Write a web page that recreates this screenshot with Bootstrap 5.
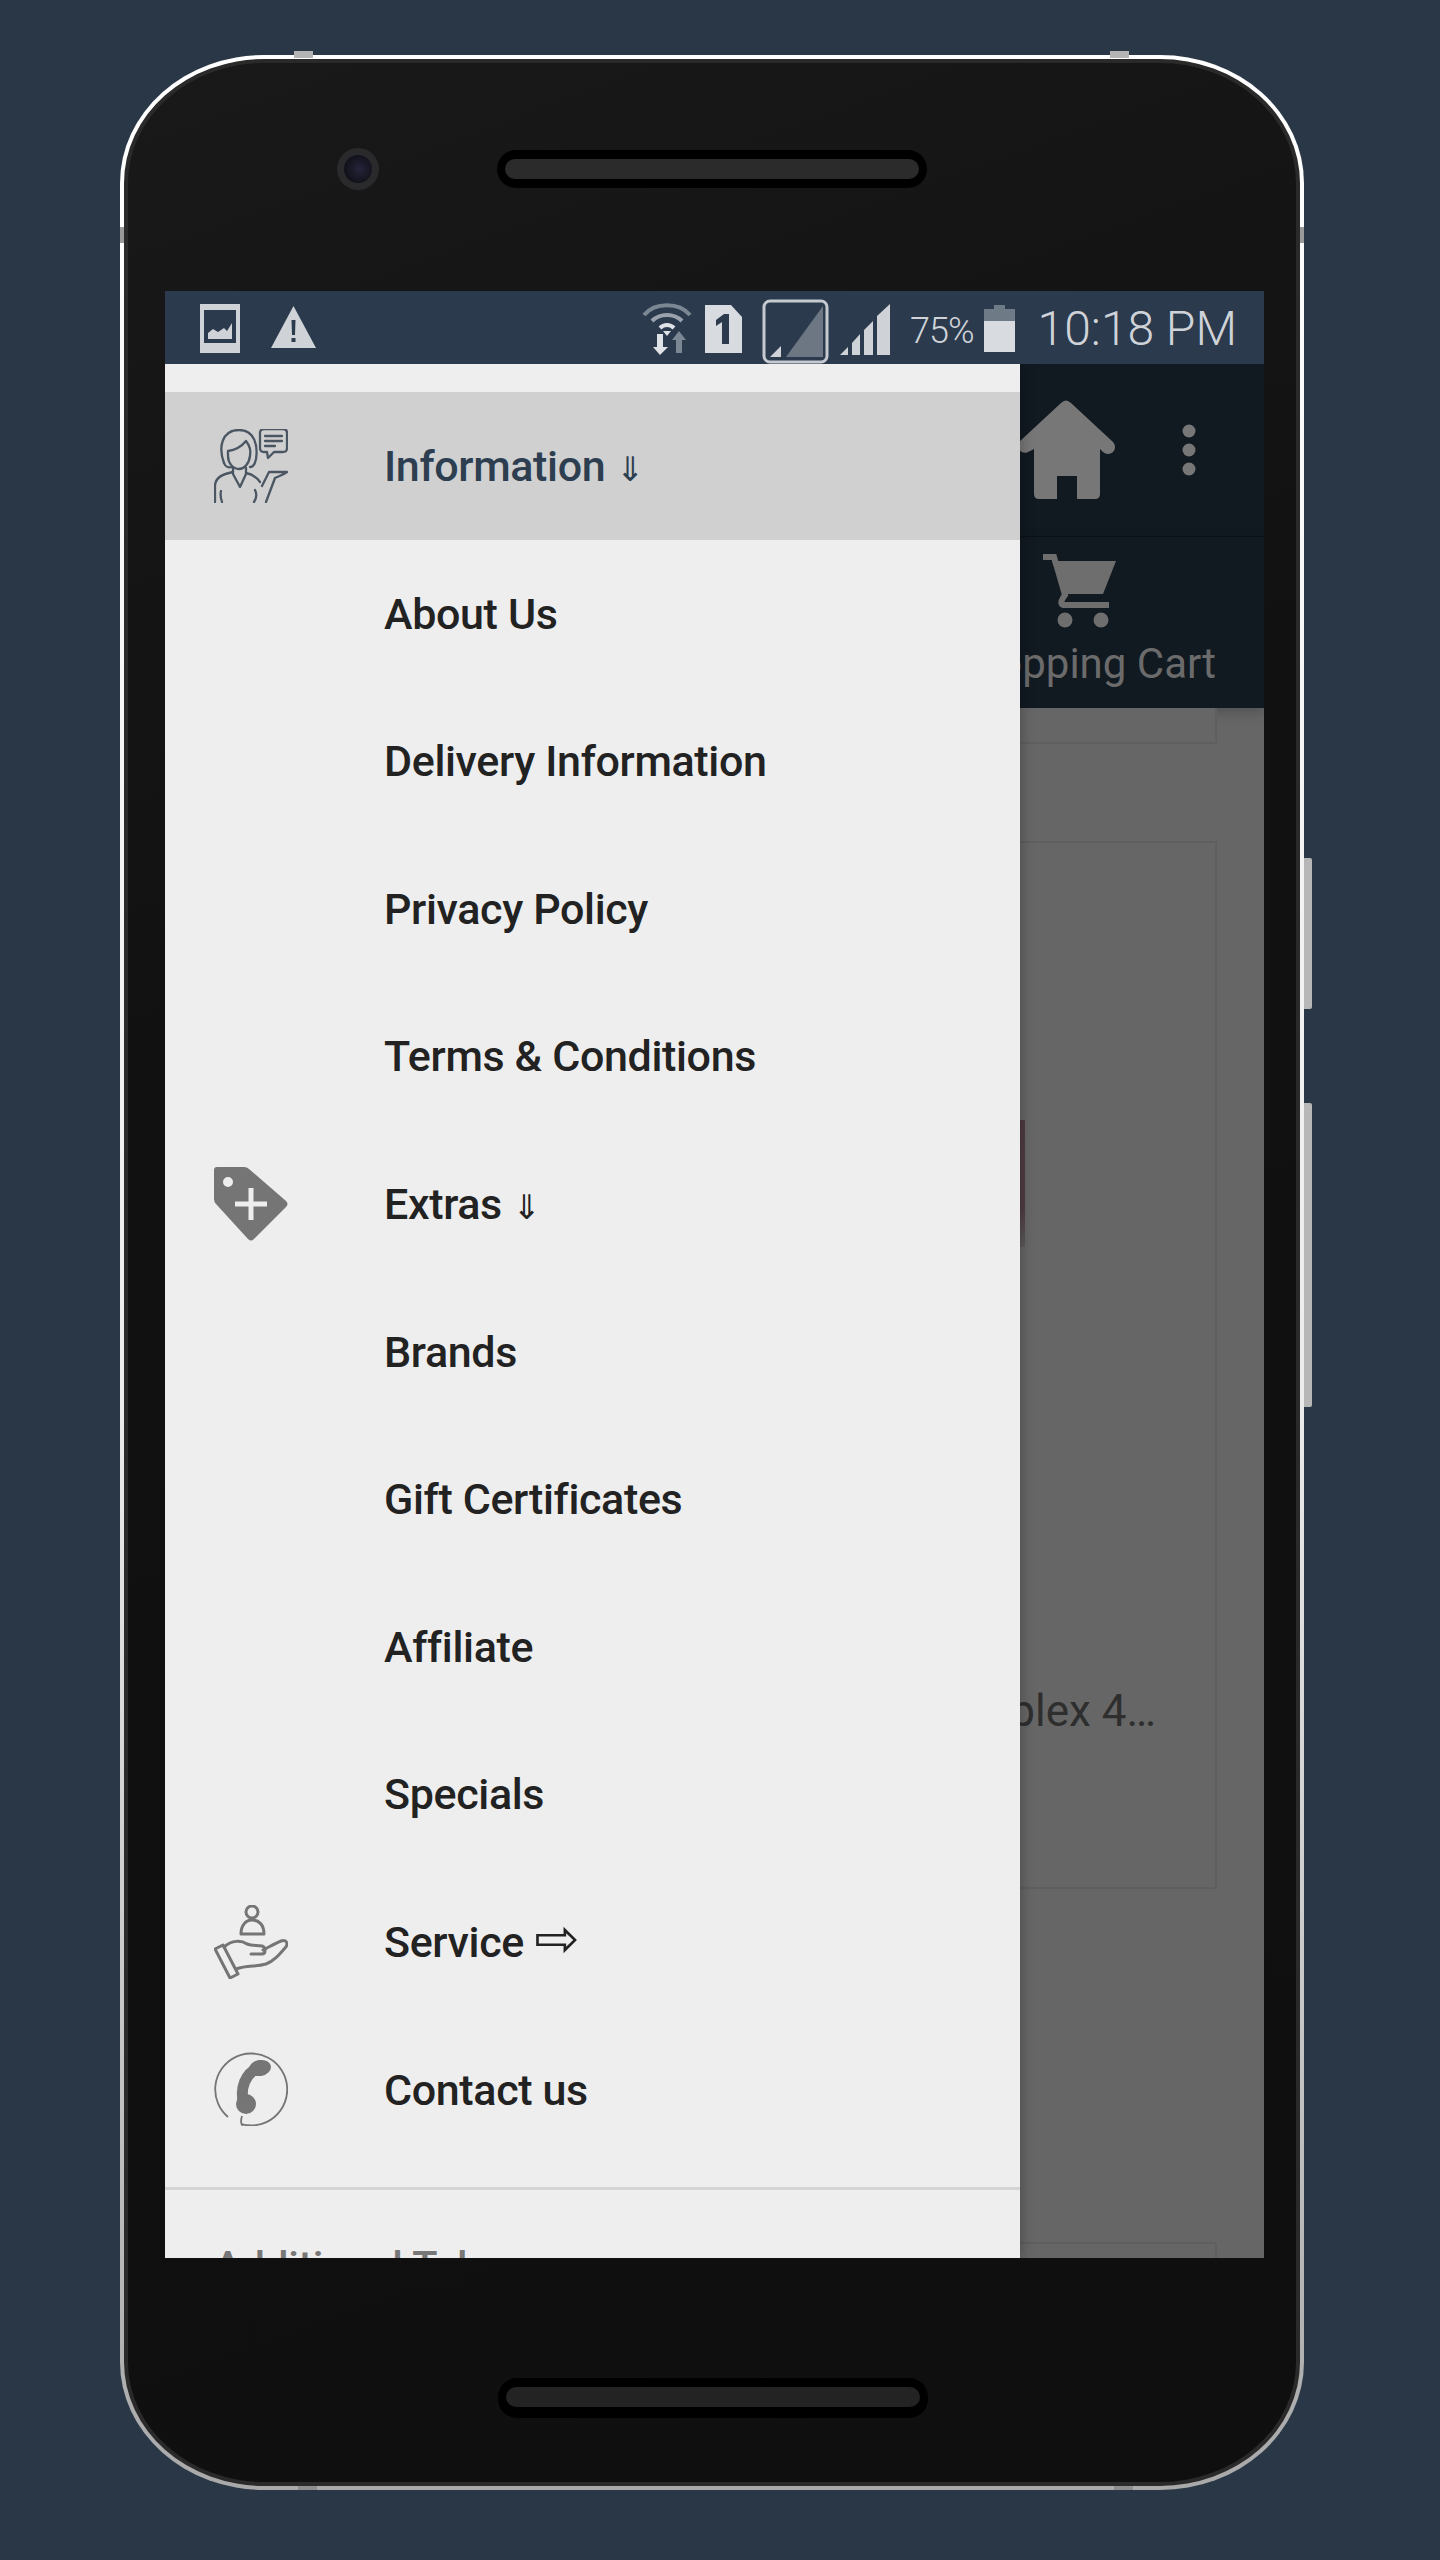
<!DOCTYPE html>
<html lang="en">
<head>
  <meta charset="UTF-8">
  <title>Menu</title>
  <link href="https://cdn.jsdelivr.net/npm/bootstrap@5.3.0/dist/css/bootstrap.min.css" rel="stylesheet">
  <style>
    body { background: #2a3747; font-family: Roboto, sans-serif; margin: 0; height: 2560px; overflow: hidden; }

    /* phone shell */
    .phone-shell { width: 1184px; height: 2435px; margin: 55px 0 0 120px; padding: 4px; border-radius: 144px / 128px;
      background: linear-gradient(180deg, #fff 0%, #ececec 55%, #a9a9a9 100%); position: relative; }
    .bezel { height: 100%; border-radius: 140px / 124px; border: 4px solid #2a2a2a; background: linear-gradient(160deg, #191919 0%, #111 35%, #0f0f0f 100%); padding: 0 32px 0 37px; }
    .bezel-top { height: 228px; padding-left: 172px; gap: 118px; }
    .bezel-bottom { height: 225px; padding-top: 120px; }
    .camera { width: 42px; height: 42px; border-radius: 50%; background: #2a2a2c; padding: 7px; margin-top: 85px; }
    .camera span { display: block; width: 100%; height: 100%; border-radius: 50%; background: radial-gradient(circle at 55% 50%, #26243a 0, #11111a 70%); }
    .speaker { width: 430px; height: 38px; border-radius: 19px; background: #000; padding: 9px 8px; margin-top: 87px; }
    .speaker span { display: block; height: 20px; border-radius: 10px; background: #2b2b2b; }
    .speaker-low { margin: 0 0 0 333px; height: 40px; }
    .speaker-low span { background: #232323; }
    .side-key { position: absolute; left: 1184px; width: 8px; background: #b7b7b7; border-radius: 0 2px 2px 0; }
    .key-a { top: 803px; height: 151px; }
    .key-b { top: 1048px; height: 304px; }
    .top-tab { position: absolute; width: 19px; height: 7px; background: #b4b4b4; top: -4px; }
    .edge-band { position: absolute; width: 4px; height: 16px; top: 172px; background: #9a9a9a; }
    .low-band { position: absolute; width: 19px; height: 4px; bottom: 0; background: #8e8e8e; }

    /* screen */
    .screen { width: 1099px; height: 1967px; overflow: hidden; position: relative; background: #666; }
    .status-line { height: 73px; background: #2b3a4c; color: #cfd3d8; position: relative; z-index: 2; }
    .status-pct { font-size: 36px; font-weight: 300; line-height: 1; letter-spacing: -1px; }
    .status-time { font-size: 48px; font-weight: 300; line-height: 1; }
    .app-bar { height: 173px; background: #111921; padding-right: 68px; gap: 64px; border-bottom: 1px solid #0c1218; }
    .tab-strip { height: 171px; background: #111921; padding-right: 48px; position: relative; box-shadow: 0 4px 12px rgba(0,0,0,.22); }
    .tab-cart { font-size: 42px; line-height: 1; color: #6b6b6b; white-space: nowrap; margin-top: 15px; }
    .cart-icon { margin: 17px 7px 0 0; }
    .product-box { background: #666; border: 2px solid #5f5f5f; color: #2e2e2e; margin: 0 47px; }
    .box-a { height: 36px; margin-bottom: 97px; border-top: 0; }
    .box-b { height: 1048px; margin-bottom: 353px; }
    .box-c { height: 200px; }
    .shot-edge { width: 811px; height: 127px; margin-top: 277px; background: linear-gradient(180deg, #4e3a40 0%, #4f3d43 70%, #5c5a5b 100%); }
    .box-title { font-size: 44px; line-height: 1.2; text-align: right; padding: 438px 59px 0 0; }

    /* drawer */
    .side-drawer { position: absolute; top: 73px; left: 0; bottom: 0; width: 855px; background: #eee; padding-top: 28px; box-shadow: 0 0 14px rgba(0,0,0,.3); overflow: hidden; }
    .drawer-row { height: 147.6px; padding: 1px 0 0 49px; gap: 96px; background: transparent; border: 0; color: #222; font-size: 43px; font-weight: 500; letter-spacing: -.35px; }
    .drawer-row.is-open { background: #d0d0d0; color: #2c3e50; }
    .row-icon { width: 74px; height: 74px; flex: none; margin-top: -1px; }
    .arrow-mark { font-family: "DejaVu Sans", sans-serif; font-weight: 400; font-size: 34px; line-height: 0; }
    .arrow-wide { font-size: 54px; }
    .drawer-line { height: 3px; background: #d4d4d4; margin-top: 24px; }
    .drawer-extra { color: #777; font-size: 41.500px; font-weight: 500; padding: 51px 0 0 49px; line-height: 1.2; }
  </style>
</head>
<body>
  <div class="phone-shell">
    <div class="top-tab" style="left:174px"></div>
    <div class="top-tab" style="left:990px"></div>
    <div class="edge-band" style="left:0"></div>
    <div class="edge-band" style="right:0"></div>
    <div class="low-band" style="left:178px"></div>
    <div class="low-band" style="left:994px"></div>
    <div class="side-key key-a"></div>
    <div class="side-key key-b"></div>

    <div class="bezel">
      <!-- camera and earpiece -->
      <div class="bezel-top d-flex align-items-start">
        <div class="camera"><span></span></div>
        <div class="speaker"><span></span></div>
      </div>

      <div class="screen">
        <!-- status bar -->
        <div class="status-line d-flex align-items-center">
          <svg width="40" height="49" viewBox="0 0 40 49" style="margin-left:35px;margin-top:2px">
            <path fill="#cfd3d8" fill-rule="evenodd" d="M0 0H40V49H0ZM4 6V39H36V6Z"/>
            <path fill="#cfd3d8" d="M8 35V29L13 25L18 28L24 24L27 27L32 19V35Z"/>
          </svg>
          <svg width="45" height="42" viewBox="0 0 45 42" style="margin-left:31px;margin-top:-1px">
            <path fill="#cfd3d8" fill-rule="evenodd" d="M22.500 0L45 42H0ZM20.500 14L21 29H24L24.500 14ZM20.500 32V36H24.500V32Z"/>
          </svg>
          <svg width="50" height="54" viewBox="0 0 50 54" style="margin-left:326px;margin-top:0">
            <g fill="none" stroke-width="4">
              <path stroke="#7c8794" d="M2 14C13 1 37 1 48 14"/>
              <path stroke="#9aa3ad" d="M10 20C18 12 32 12 40 20"/>
              <path stroke="#dfe2e6" d="M18 27C22 23 28 23 32 27"/>
            </g>
            <path fill="#dfe2e6" d="M25 35L21 30H29Z"/>
            <path fill="#dfe2e6" d="M15 33H21V46H26L18 54L11 46H15Z"/>
            <path fill="#7c8794" d="M37 30L44 39H40V52H34V39H30Z"/>
          </svg>
          <svg width="37" height="48" viewBox="0 0 37 48" style="margin-left:13px;margin-top:3px">
            <path fill="#d8dbdf" d="M0 0H26L37 12V48H0Z"/>
            <path fill="#2b3a4c" d="M11 15L19 9H24V39H17V17L11 21Z"/>
          </svg>
          <svg width="67" height="65" viewBox="0 0 67 65" style="margin-left:20px;margin-top:7px">
            <rect x="2" y="2" width="63" height="61" rx="6" fill="none" stroke="#c5cad0" stroke-width="3"/>
            <path fill="#6c7783" d="M61 7V58H24Z"/>
            <path fill="#cfd3d8" d="M19 47V58H8Z"/>
          </svg>
          <svg width="50" height="51" viewBox="0 0 50 51" style="margin-left:11px;margin-top:4px">
            <path fill="#cfd3d8" d="M0 51L8 43V51ZM12 39L20 30V51H12ZM24 26L33 17V51H24ZM37 12L50 0V51H37Z"/>
          </svg>
          <span class="status-pct" style="margin-left:20px;margin-top:6px">75%</span>
          <svg width="31" height="47" viewBox="0 0 31 47" style="margin-left:10px;margin-top:1px">
            <path fill="#6f7a87" d="M10 0H21V4H31V16H0V4H10Z"/>
            <path fill="#d8dbdf" d="M0 16H31V47H0Z"/>
          </svg>
          <span class="status-time" style="margin-left:23px;margin-top:3px">10:18 PM</span>
        </div>

        <!-- page behind the drawer, dimmed -->
        <div class="app-bar d-flex justify-content-end align-items-center">
          <svg width="105" height="106" viewBox="0 0 105 106">
            <path fill="#777" d="M48 6Q53 1 58 6L100 45A7 7 0 0 1 90 55L87 52V97Q87 102 82 102H64V79H44V102H26Q21 102 21 97V52L15 55A7 7 0 0 1 6 45Z"/>
          </svg>
          <svg width="14" height="52" viewBox="0 0 14 52" style="margin-top:-1px">
            <circle cx="7" cy="7" r="6.500" fill="#777"/>
            <circle cx="7" cy="26" r="6.500" fill="#777"/>
            <circle cx="7" cy="45" r="6.500" fill="#777"/>
          </svg>
        </div>
        <div class="tab-strip d-flex justify-content-end">
          <div class="d-flex flex-column align-items-center">
            <svg class="cart-icon" width="74" height="74" viewBox="0 0 74 74">
              <path fill="#6e6e6e" d="M9 7H73L60 40H21Z"/>
              <path fill="none" stroke="#6e6e6e" stroke-width="6" d="M0 3H11L22 41Q14 52 23 51H66"/>
              <circle cx="22" cy="66" r="7.500" fill="#6e6e6e"/>
              <circle cx="58" cy="66" r="7.500" fill="#6e6e6e"/>
            </svg>
            <div class="tab-cart">Shopping Cart</div>
          </div>
        </div>
        <div class="card rounded-0 product-box box-a"></div>
        <div class="card rounded-0 product-box box-b">
          <div class="shot-edge"></div>
          <div class="box-title">Complex 4…</div>
        </div>
        <div class="card rounded-0 product-box box-c"></div>

        <!-- drawer -->
        <div class="side-drawer">
          <div class="list-group list-group-flush rounded-0">
            <div class="list-group-item d-flex align-items-center drawer-row is-open">
              <svg class="row-icon" viewBox="0 0 74 74" fill="none" stroke="#4b5663" stroke-width="2.300" stroke-linecap="round" stroke-linejoin="round">
                <path d="M10 34C4 18 8 1 25 1C41 1 44 17 42 30C41 35 39 38 36 38"/>
                <path d="M10 34C11 37 14 39 18 38"/>
                <path d="M14 22C21 21 28 17 32 12C36 17 37 22 36 27C35 35 30 40 25 40C19 40 14 34 14 27Z"/>
                <path d="M19 39V45L26 58L32 45V39"/>
                <path d="M19 43C8 45 1 49 1 57V73"/>
                <path d="M32 44C38 45 43 49 46 53"/>
                <path d="M7 62C6 66 7 70 8 73M41 61C43 65 42 70 40 73"/>
                <path d="M52 73L61 49C65 47 69 46 73 43H55L48 57"/>
                <path d="M50 0H69Q73 0 73 4V19Q73 23 69 23H60L54 29L53 23H50Q46 23 46 19V4Q46 0 50 0Z"/>
                <path d="M51 7H68M51 12H68M51 17H61"/>
              </svg>
              <span>Information <span class="arrow-mark">⇓</span></span>
            </div>
            <div class="list-group-item d-flex align-items-center drawer-row"><span class="row-icon"></span><span>About Us</span></div>
            <div class="list-group-item d-flex align-items-center drawer-row"><span class="row-icon"></span><span>Delivery Information</span></div>
            <div class="list-group-item d-flex align-items-center drawer-row"><span class="row-icon"></span><span>Privacy Policy</span></div>
            <div class="list-group-item d-flex align-items-center drawer-row"><span class="row-icon"></span><span>Terms &amp; Conditions</span></div>
            <div class="list-group-item d-flex align-items-center drawer-row">
              <svg class="row-icon" viewBox="0 0 74 74">
                <path fill="#757575" fill-rule="evenodd" d="M3 0H30Q33 0 35 2L72 34Q75 37 72 40L40 72Q37 75 34 72L2 37Q0 35 0 32V3Q0 0 3 0ZM14 10A5 5 0 1 0 14 20A5 5 0 1 0 14 10ZM34.500 21V34.500H21V39.500H34.500V53H39.500V39.500H53V34.500H39.500V21Z"/>
              </svg>
              <span>Extras <span class="arrow-mark">⇓</span></span>
            </div>
            <div class="list-group-item d-flex align-items-center drawer-row"><span class="row-icon"></span><span>Brands</span></div>
            <div class="list-group-item d-flex align-items-center drawer-row"><span class="row-icon"></span><span>Gift Certificates</span></div>
            <div class="list-group-item d-flex align-items-center drawer-row"><span class="row-icon"></span><span>Affiliate</span></div>
            <div class="list-group-item d-flex align-items-center drawer-row"><span class="row-icon"></span><span>Specials</span></div>
            <div class="list-group-item d-flex align-items-center drawer-row">
              <svg class="row-icon" viewBox="0 0 74 74" fill="none" stroke="#757575" stroke-width="3" stroke-linejoin="round" stroke-linecap="round">
                <circle cx="38" cy="7" r="6"/>
                <path d="M27 29C27 20 32 15 38 15C45 15 50 20 50 29Z"/>
                <path d="M1 44L16 73L24 69L9 40Z"/>
                <path d="M10 42C18 35 27 35 33 39C38 41 43 40 48 41C52 42 52 49 48 49H37"/>
                <path d="M49 45C55 42 62 38 67 36C74 34 74 40 71 43C65 50 60 56 52 59C42 62 33 60 22 64"/>
              </svg>
              <span>Service <span class="arrow-mark arrow-wide">⇨</span></span>
            </div>
            <div class="list-group-item d-flex align-items-center drawer-row">
              <svg class="row-icon" viewBox="0 0 74 74">
                <path fill="none" stroke="#757575" stroke-width="1.800" d="M14 65A36 36 0 1 1 27 72C31 74 25 74 28 64"/>
                <path fill="none" stroke="#757575" stroke-width="11" d="M44 16C32 21 25 36 30 52"/>
                <ellipse cx="46" cy="16" rx="11" ry="8" fill="#757575" transform="rotate(-10 46 16)"/>
                <ellipse cx="32" cy="52" rx="10" ry="10" fill="#757575"/>
              </svg>
              <span>Contact us</span>
            </div>
          </div>
          <div class="drawer-line"></div>
          <div class="drawer-extra">Additional Tabs</div>
        </div>
      </div>

      <div class="bezel-bottom">
        <div class="speaker speaker-low"><span></span></div>
      </div>
    </div>
  </div>
  <script src="https://cdn.jsdelivr.net/npm/bootstrap@5.3.0/dist/js/bootstrap.bundle.min.js"></script>
</body>
</html>
